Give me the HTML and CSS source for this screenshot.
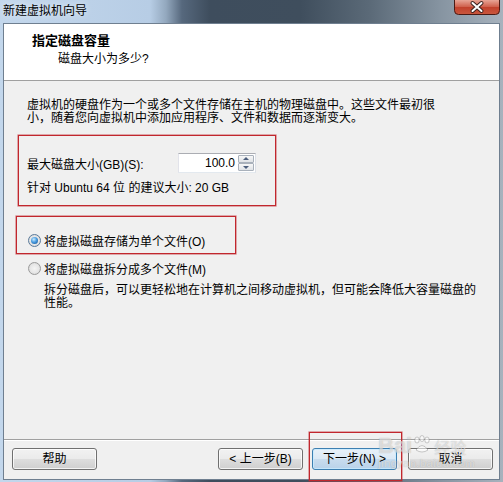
FILE: index.html
```html
<!DOCTYPE html>
<html lang="zh-CN">
<head>
<meta charset="utf-8">
<title>新建虚拟机向导</title>
<link rel="stylesheet" href="styles.css">
</head>
<body>
<div class="win">
  <div class="titlebar">
    <span class="title">新建虚拟机向导</span>
    <div class="close">
      <svg width="46" height="15" viewBox="0 0 46 15">
        <defs>
          <linearGradient id="cg" x1="0" y1="0" x2="0" y2="1">
            <stop offset="0" stop-color="#e7a596"/>
            <stop offset="0.45" stop-color="#d0634f"/>
            <stop offset="0.5" stop-color="#c1412c"/>
            <stop offset="1" stop-color="#c9583e"/>
          </linearGradient>
        </defs>
        <path d="M0.5 0 V10.5 Q0.5 14.5 4.5 14.5 H41.5 Q45.5 14.5 45.5 10.5 V0" fill="url(#cg)" stroke="#4a1a14" stroke-width="1"/>
        <path d="M18.5 3 L27.5 11 M27.5 3 L18.5 11" stroke="#3b2320" stroke-width="4" stroke-linecap="round"/>
        <path d="M18.5 3 L27.5 11 M27.5 3 L18.5 11" stroke="#ffffff" stroke-width="2" stroke-linecap="round"/>
      </svg>
    </div>
  </div>
  <div class="client">
    <div class="header">
      <div class="h1">指定磁盘容量</div>
      <div class="h2">磁盘大小为多少?</div>
    </div>
    <div class="content">
      <p class="desc">虚拟机的硬盘作为一个或多个文件存储在主机的物理磁盘中。这些文件最初很<br>小，随着您向虚拟机中添加应用程序、文件和数据而逐渐变大。</p>
      <div class="size-row">
        <span class="label">最大磁盘大小(GB)(S):</span>
        <div class="spin">
          <div class="spin-value">100.0</div>
          <div class="spin-btns">
            <span class="sb up"></span>
            <span class="sb down"></span>
          </div>
        </div>
      </div>
      <div class="rec">针对 Ubuntu 64 位 的建议大小: 20 GB</div>
      <div class="radio-row first"><span class="radio checked"></span><span class="rtext">将虚拟磁盘存储为单个文件(O)</span></div>
      <div class="radio-row second"><span class="radio"></span><span class="rtext">将虚拟磁盘拆分成多个文件(M)</span></div>
      <p class="note">拆分磁盘后，可以更轻松地在计算机之间移动虚拟机，但可能会降低大容量磁盘的<br>性能。</p>
    </div>
    <div class="footer">
      <button class="btn">帮助</button>
      <div class="grow"></div>
      <button class="btn">&lt; 上一步(B)</button>
      <button class="btn default">下一步(N) &gt;</button>
      <button class="btn last">取消</button>
    </div>
  </div>
  <div class="mark mark-size"></div>
  <div class="mark mark-radio"></div>
  <div class="mark mark-next"></div>
  <div class="watermark">
    <div class="wm-top"><span class="wm-bai">Bai</span><svg class="wm-paw" width="20" height="20" viewBox="0 0 20 20"><g fill="rgba(255,255,255,0.55)" stroke="rgba(110,110,110,0.35)" stroke-width="1"><ellipse cx="5" cy="5" rx="2.2" ry="3"/><ellipse cx="10" cy="3.5" rx="2.2" ry="3"/><ellipse cx="15" cy="5" rx="2.2" ry="3"/><path d="M4 15 Q10 6 16 15 Q10 19 4 15 Z"/></g></svg><span class="wm-cn">经验</span></div>
    <div class="wm-url">jingyan.baidu.com</div>
  </div>
</div>
</body>
</html>
```
FILE: styles.css
```css
html, body {
  margin: 0;
  padding: 0;
}
body {
  width: 503px;
  height: 482px;
  overflow: hidden;
  font-family: "Liberation Sans", "Noto Sans CJK SC", sans-serif;
  font-size: 12px;
  color: #000;
}
.win {
  position: relative;
  width: 503px;
  height: 482px;
  display: flex;
  flex-direction: column;
  background: linear-gradient(90deg, #c3d7ec 0, #b7cde5 150px, #93a8be 166px, #56687d 182px, #3e4d5d 210px, #3f4e5d 300px, #5b6a78 370px, #8694a1 440px, #a7b2bd 503px);
}
.titlebar {
  height: 23px;
  flex: none;
  display: flex;
  align-items: flex-start;
  justify-content: space-between;
}
.title {
  padding: 3px 0 0 3px;
  line-height: 16px;
  font-size: 12px;
  color: #000;
  text-shadow: 0 0 6px rgba(255,255,255,0.8);
}
.close {
  margin-right: 3px;
  width: 46px;
  height: 15px;
}
.close svg {
  display: block;
}
.client {
  flex: none;
  height: 457px;
  margin: 0 3px;
  box-sizing: border-box;
  border: 1px solid #6f7f90;
  display: flex;
  flex-direction: column;
  background: #f0f0f0;
}
.header {
  flex: none;
  height: 57px;
  box-sizing: border-box;
  background: #fff;
  border-bottom: 1px solid #a0a0a0;
  padding-top: 9px;
}
.h1 {
  font-weight: bold;
  font-size: 13px;
  line-height: 16px;
  padding-left: 28px;
}
.h2 {
  line-height: 16px;
  margin-top: 2px;
  padding-left: 54px;
}
.content {
  flex: 1;
  padding: 18px 0 0 23px;
  min-height: 0;
}
.desc {
  margin: 0;
  line-height: 13px;
}
.size-row {
  margin-top: 28px;
  display: flex;
  align-items: center;
  height: 20px;
}
.label {
  width: 151px;
  flex: none;
}
.spin {
  width: 78px;
  height: 20px;
  box-sizing: border-box;
  border: 1px solid;
  border-color: #abadb3 #dbdfe6 #e3e9ef #e2e3ea;
  background: #fff;
  display: flex;
}
.spin-value {
  flex: 1;
  text-align: right;
  padding-right: 3px;
  line-height: 18px;
}
.spin-btns {
  width: 16px;
  display: flex;
  flex-direction: column;
  justify-content: space-between;
  padding: 1px 1px 1px 0;
}
.sb {
  position: relative;
  height: 8px;
  box-sizing: border-box;
  border: 1px solid #a9b1bb;
  border-radius: 1px;
  background: linear-gradient(#f7f7f7, #dfe2e6);
}
.sb::after {
  content: "";
  position: absolute;
  left: 4px;
  width: 0;
  height: 0;
  border-left: 3px solid transparent;
  border-right: 3px solid transparent;
}
.sb.up::after {
  top: 1px;
  border-bottom: 3px solid #4c5e7c;
}
.sb.down::after {
  top: 2px;
  border-top: 3px solid #4c5e7c;
}
.rec {
  margin-top: 9px;
  line-height: 13px;
}
.radio-row {
  display: flex;
  align-items: center;
  height: 16px;
  margin-left: 1px;
}
.radio-row.first {
  margin-top: 37px;
}
.radio-row.second {
  margin-top: 12px;
}
.radio {
  position: relative;
  flex: none;
  width: 13px;
  height: 13px;
  box-sizing: border-box;
  border-radius: 50%;
  border: 1px solid #9a9a9a;
  background: radial-gradient(circle at 50% 50%, #f4f4f4 0, #e6e6e6 55%, #cdcdcd 100%);
  margin-right: 3px;
}
.radio.checked {
  border-color: #5a7a9a;
}
.radio.checked::after {
  content: "";
  position: absolute;
  left: 2px;
  top: 2px;
  width: 7px;
  height: 7px;
  border-radius: 50%;
  background: radial-gradient(circle at 40% 35%, #c9ecff 0, #4a9ce0 45%, #0f4c8c 100%);
}
.note {
  margin: 8px 0 0 17px;
  line-height: 13px;
}
.footer {
  flex: none;
  height: 40px;
  box-sizing: border-box;
  border-top: 1px solid #a0a0a0;
  box-shadow: inset 0 1px 0 #fff;
  padding: 8px 6px 0 8px;
  display: flex;
  align-items: flex-start;
}
.grow {
  flex: 1;
}
.btn {
  width: 85px;
  height: 22px;
  box-sizing: border-box;
  padding: 0;
  margin-left: 9px;
  border: 1px solid #707070;
  border-radius: 3px;
  background: linear-gradient(#f2f2f2 0, #ebebeb 48%, #dddddd 52%, #cfcfcf 100%);
  box-shadow: inset 0 0 0 1px rgba(255,255,255,0.75);
  font-family: "Liberation Sans", "Noto Sans CJK SC", sans-serif;
  font-size: 12px;
  line-height: 18px;
  color: #000;
}
.btn:first-child {
  margin-left: 0;
}
.btn.last {
  margin-left: 11px;
}
.btn.default {
  border-color: #3c7fb1;
  background: linear-gradient(#e8f1f9 0, #dce9f5 48%, #c8dcee 52%, #b9d2e9 100%);
  box-shadow: inset 0 0 0 1px rgba(200,235,255,0.8);
}
.mark {
  position: absolute;
  box-sizing: border-box;
  border: 1px solid #c1272d;
  box-shadow: 0 0 0 0.6px rgba(193,39,45,0.6);
  pointer-events: none;
}
.mark-size {
  left: 18px;
  top: 135px;
  width: 258px;
  height: 71px;
}
.mark-radio {
  left: 16px;
  top: 216px;
  width: 220px;
  height: 38px;
}
.mark-next {
  left: 309px;
  top: 432px;
  width: 93px;
  height: 49px;
}
.watermark {
  position: absolute;
  left: 378px;
  top: 421px;
  width: 100px;
  pointer-events: none;
  color: rgba(255,255,255,0.55);
  text-shadow: 0 0 1px rgba(100,100,100,0.45);
}
.wm-top {
  display: flex;
  align-items: flex-end;
  height: 36px;
}
.wm-bai {
  font-family: "Liberation Sans", sans-serif;
  font-weight: bold;
  font-size: 22px;
  line-height: 22px;
}
.wm-paw {
  margin: 0 2px 2px 0;
}
.wm-cn {
  font-family: "Noto Sans CJK SC", sans-serif;
  font-size: 16px;
  line-height: 20px;
}
.wm-url {
  font-family: "Liberation Sans", sans-serif;
  font-size: 11px;
  line-height: 12px;
  letter-spacing: 0.5px;
}
```
